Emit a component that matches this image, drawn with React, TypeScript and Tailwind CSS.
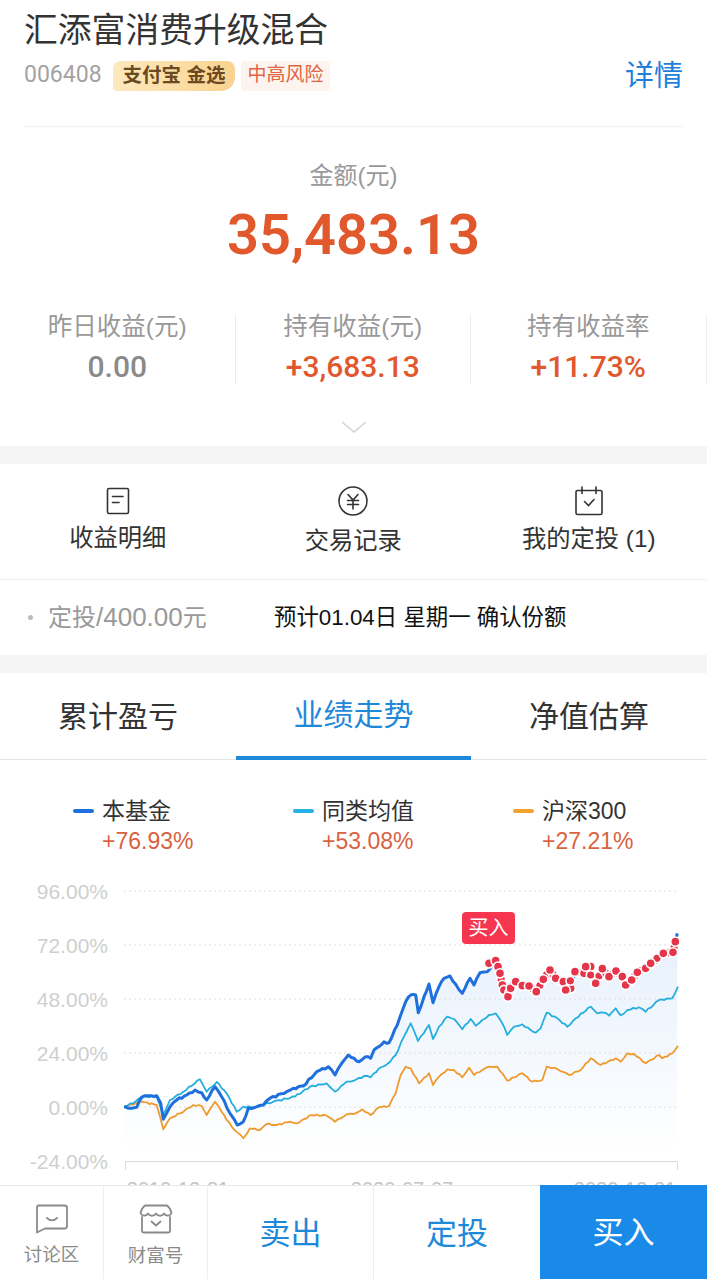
const cjk = "font-['Liberation_Sans','Noto_Sans_CJK_SC',sans-serif]";
const num = "font-['Roboto','Noto_Sans_CJK_SC',sans-serif]";

// chart traces, read off the picture as [x, y] in page pixels
const toPage = (pts: number[][], ox: number) => pts.map(([x, y]) => [ox + x / 3, 870 + y / 3]);

const bluePts = [
  ...toPage([[373,710],[395,715],[410,712],[425,682],[445,677],[470,677],[482,700],[490,748],[510,710],[530,690],[560,675],[585,660],[605,668],[620,690],[645,650],[665,680],[690,730],[712,765],[730,755],[745,715],[765,712],[790,705],[810,685],[860,665],[880,655],[910,648],[950,605],[985,590],[1005,615],[1025,580],[1045,555]], 0),
  ...toPage([[0,565],[15,575],[35,560],[50,565],[60,540],[75,530],[90,515],[105,518],[130,465],[155,395],[170,375],[185,375],[193,428],[210,380],[225,342],[237,398],[255,350],[270,325],[288,318],[305,343],[325,370],[348,325],[360,345],[378,308],[400,305],[425,272],[438,310],[462,380],[485,335],[505,347],[525,348],[547,365],[568,328],[588,300],[628,335],[650,355],[663,305],[710,290],[725,340],[745,296],[765,320],[786,303],[815,345],[850,307],[905,270],[957,247],[964,215],[970,190]], 354),
];

const cyanPts = [
  ...toPage([[373,708],[400,700],[425,680],[470,680],[490,735],[510,690],[550,665],[600,628],[620,665],[650,636],[680,670],[710,725],[730,710],[760,712],[820,695],[885,680],[930,650],[980,640],[1005,665],[1040,635]], 0),
  ...toPage([[0,632],[30,618],[50,622],[75,595],[100,582],[125,555],[150,500],[170,460],[192,513],[225,465],[237,507],[255,470],[280,440],[300,447],[325,478],[350,447],[365,467],[385,450],[405,435],[425,430],[445,460],[460,495],[480,470],[505,463],[530,480],[545,488],[560,475],[578,428],[610,445],[640,470],[665,445],[710,410],[730,430],[750,428],[765,437],[785,415],[800,436],[820,420],[855,412],[875,425],[915,390],[955,385],[972,350]], 354),
];

const orangePts = [
  ...toPage([[373,710],[425,695],[470,705],[490,778],[510,745],[540,730],[580,705],[605,708],[620,735],[645,695],[665,725],[695,770],[730,805],[750,775],[780,780],[800,762],[830,765],[870,755],[890,760],[935,735],[980,737],[1005,755],[1040,733]], 0),
  ...toPage([[0,732],[25,718],[50,735],[75,712],[105,708],[125,670],[140,615],[155,590],[170,595],[195,640],[225,610],[237,645],[255,620],[280,598],[300,600],[325,622],[345,593],[360,615],[385,600],[405,590],[430,590],[460,632],[505,610],[535,635],[565,630],[578,590],[610,597],[645,615],[680,600],[710,565],[740,585],[785,565],[800,575],[820,550],[840,552],[875,580],[915,555],[925,565],[955,550],[972,527]], 354),
];

const redDots = toPage([[405,280],[425,272],[432,290],[438,310],[445,345],[450,360],[462,380],[470,355],[485,335],[505,347],[525,348],[547,365],[568,328],[588,300],[605,325],[628,335],[650,355],[635,360],[663,305],[690,310],[710,290],[695,290],[725,340],[745,296],[765,320],[786,303],[805,320],[815,345],[833,330],[850,307],[875,295],[905,270],[890,280],[928,250],[957,247],[964,215]], 354);

// adds small fixed wiggle between the read-off points
function wiggle(pts: number[][], amp: number) {
  const out: number[][] = [];
  pts.forEach((p, i) => {
    out.push(p);
    const n = pts[i + 1];
    if (!n) return;
    const steps = Math.floor((n[0] - p[0]) / 2.5);
    for (let s = 1; s < steps; s++) {
      const t = s / steps;
      out.push([p[0] + (n[0] - p[0]) * t, p[1] + (n[1] - p[1]) * t + Math.sin(s * 2.3 + i) * amp]);
    }
  });
  return out;
}

const toStr = (pts: number[][]) => pts.map(([x, y]) => `${x.toFixed(1)},${(y - 880).toFixed(1)}`).join(" ");

function Chart() {
  const blue = wiggle(bluePts, 1);
  const area = `${toStr(blue)} 677,270 124,270`;
  const grid = [
    ["96.00%", 891],
    ["72.00%", 945],
    ["48.00%", 999],
    ["24.00%", 1053],
    ["0.00%", 1107],
    ["-24.00%", 1161],
  ] as const;
  return (
    <svg width="707" height="306" viewBox="0 0 707 306" className="block">
      <defs>
        <linearGradient id="areaFill" x1="0" y1="0" x2="0" y2="1">
          <stop offset="0" stopColor="#e6f0fc" />
          <stop offset="1" stopColor="#ffffff" />
        </linearGradient>
      </defs>
      <polygon points={area} fill="url(#areaFill)" />
      {grid.map(([label, y], i) => (
        <g key={label}>
          {i < 5 && <line x1="124" x2="677" y1={y - 880} y2={y - 880} stroke="#dedede" strokeWidth="1" strokeDasharray="2 3" />}
          <text x="108" y={y - 880 + 8} textAnchor="end" fontSize="21" fill="#cfcfcf" fontFamily="Liberation Sans, sans-serif">{label}</text>
        </g>
      ))}
      <path d="M125.5 290V281.5H677.5V290" fill="none" stroke="#dcdcdc" strokeWidth="1" />
      <text x="178" y="316" textAnchor="middle" fontSize="20" fill="#c4c4c4" fontFamily="Liberation Sans, sans-serif">2019-12-31</text>
      <text x="402" y="316" textAnchor="middle" fontSize="20" fill="#c4c4c4" fontFamily="Liberation Sans, sans-serif">2020-07-07</text>
      <text x="625" y="316" textAnchor="middle" fontSize="20" fill="#c4c4c4" fontFamily="Liberation Sans, sans-serif">2020-12-31</text>
      <polyline points={toStr(wiggle(orangePts, 0.7))} fill="none" stroke="#ef9a2e" strokeWidth="1.8" strokeLinejoin="round" />
      <polyline points={toStr(wiggle(cyanPts, 0.8))} fill="none" stroke="#25aedd" strokeWidth="1.8" strokeLinejoin="round" />
      <polyline points={toStr(blue)} fill="none" stroke="#1f6fdc" strokeWidth="3" strokeLinejoin="round" />
      {redDots.map(([x, y], i) => {
        const next = redDots[i + 1];
        return (
          <g key={i}>
            {next && <circle cx={(x + next[0]) / 2} cy={(y + next[1]) / 2 - 880} r="4.4" fill="#e5354b" stroke="#ffffff" strokeWidth="1.6" />}
            <circle cx={x} cy={y - 880} r="4.6" fill="#e5354b" stroke="#ffffff" strokeWidth="1.6" />
          </g>
        );
      })}
      <rect x="462" y="32" width="53" height="32" rx="4" fill="#f5364e" />
      <text x="488.5" y="55" textAnchor="middle" fontSize="20" fill="#fff" fontFamily="Noto Sans CJK SC, sans-serif">买入</text>
    </svg>
  );
}

function Stat({ label, value, accent }: { label: string; value: string; accent?: boolean }) {
  return (
    <div className="flex h-[70px] w-[235.5px] flex-col items-center justify-between border-r border-[#eeeeee]">
      <span className="text-[24.5px] leading-[26px] text-[#999999]">{label}</span>
      <span className={`${num} text-[30px] leading-[34px] font-medium ${accent ? "text-[#e0582c]" : "text-[#8a8a8a]"}`}>{value}</span>
    </div>
  );
}

function Legend({ color, name, pct }: { color: string; name: string; pct: string }) {
  return (
    <div className="w-[220px] shrink-0">
      <div className="flex items-center">
        <span className={`h-[4px] w-[21px] rounded-full ${color}`} />
        <span className="ml-[8px] text-[23px] leading-[30px] text-[#333333]">{name}</span>
      </div>
      <div className="ml-[29px] text-[23px] leading-[30px] text-[#d9633f]">{pct}</div>
    </div>
  );
}

function DocIcon() {
  return (
    <svg width="24" height="28" viewBox="0 0 24 28" fill="none" stroke="#333" strokeWidth="1.6">
      <rect x="1.5" y="1.5" width="21" height="25" rx="1.5" />
      <path d="M6.5 9.5H17M6.5 15.5H13" strokeLinecap="round" />
    </svg>
  );
}

function YuanIcon() {
  return (
    <svg width="30" height="30" viewBox="0 0 30 30" fill="none" stroke="#333" strokeWidth="1.6">
      <circle cx="15" cy="15" r="14" />
      <path d="M10 8.5L15 14L20 8.5M9.5 14.5H20.5M9.5 18.5H20.5M15 14V23" strokeLinecap="round" />
    </svg>
  );
}

function CalIcon() {
  return (
    <svg width="30" height="30" viewBox="0 0 30 30" fill="none" stroke="#333" strokeWidth="1.6">
      <rect x="2" y="4.5" width="26" height="24" rx="1.5" />
      <path d="M8 1V7.5M22 1V7.5M10.5 15.5L14.5 19.5L20 13.5" strokeLinecap="round" />
    </svg>
  );
}

function ChatIcon() {
  return (
    <svg width="34" height="30" viewBox="0 0 34 30" fill="none" stroke="#8a8a8a" strokeWidth="1.8" strokeLinejoin="round">
      <path d="M3.5 1.5H29.5C31 1.5 32 2.5 32 4V22C32 23.5 31 24.5 29.5 24.5H10L2 28.5V3C2 2 2.5 1.5 3.5 1.5Z" />
      <path d="M12 14C15 17 19 17 22 14" strokeLinecap="round" />
    </svg>
  );
}

function ShopIcon() {
  return (
    <svg width="34" height="30" viewBox="0 0 34 30" fill="none" stroke="#8a8a8a" strokeWidth="1.8" strokeLinejoin="round">
      <path d="M6 1.5H28C30 3 32 6 32.5 9C31 12.5 27 12.5 25 9.5C23 12.5 19 12.5 17 9.5C15 12.5 11 12.5 9 9.5C7 12.5 3 12.5 1.5 9C2 6 4 3 6 1.5Z" />
      <path d="M3 13V27C3 28 3.5 28.5 4.5 28.5H29.5C30.5 28.5 31 28 31 27V13M12.5 17.5L17 21.5L21.5 17.5" strokeLinecap="round" />
    </svg>
  );
}

export default function App() {
  return (
    <div className={`relative h-[1280px] w-[707px] overflow-hidden bg-white ${cjk}`}>
      <header className="px-[24px]">
        <h1 className="h-[60px] text-[33.8px] leading-[60px] font-normal text-[#333333]">汇添富消费升级混合</h1>
        <div className="flex h-[31px] items-center">
          <span className={`${num} w-[89px] text-[23px] text-[#a3a3a3]`}>006408</span>
          <span className="flex h-[30px] w-[122px] items-center justify-center rounded-tl-[8px] rounded-tr-[8px] rounded-br-[14px] rounded-bl-[4px] bg-gradient-to-r from-[#fde9bd] to-[#f9d28f] text-[19.5px] font-bold text-[#6b4a1f]">支付宝 金选</span>
          <span className="ml-[6px] flex h-[30px] w-[89px] items-center justify-center rounded-[4px] bg-[#fdf4f0] text-[19px] text-[#e0643f]">中高风险</span>
          <span className="ml-auto text-[29px] leading-[30px] text-[#1e7fdc]">详情</span>
        </div>
        <div className="mt-[35px] border-t border-[#f1f1f1]" />
      </header>

      <section className="flex h-[319px] flex-col items-center">
        <div className="mt-[34px] text-[24px] leading-[30px] text-[#999999]">金额(元)</div>
        <div className={`${num} mt-[14px] text-[56px] leading-[60px] font-semibold text-[#e0582c]`}>35,483.13</div>
        <div className="mt-[49px] flex w-full">
          <Stat label="昨日收益(元)" value="0.00" />
          <Stat label="持有收益(元)" value="+3,683.13" accent />
          <Stat label="持有收益率" value="+11.73%" accent />
        </div>
        <svg width="26" height="12" viewBox="0 0 26 12" fill="none" stroke="#d4d4d4" strokeWidth="1.6" className="mt-[37px]">
          <path d="M1 1L13 11L25 1" />
        </svg>
      </section>

      <div className="h-[18px] bg-[#f5f5f5]" />

      <section className="flex h-[116px] border-b border-[#eeeeee]">
        {[
          { icon: <DocIcon />, label: "收益明细", pad: "pt-[23px]", gap: "mt-[6px]" },
          { icon: <YuanIcon />, label: "交易记录", pad: "pt-[22px]", gap: "mt-[8px]" },
          { icon: <CalIcon />, label: "我的定投 (1)", pad: "pt-[22px]", gap: "mt-[6px]" },
        ].map((a) => (
          <div key={a.label} className={`flex w-[235.5px] flex-col items-center ${a.pad}`}>
            {a.icon}
            <span className={`${a.gap} text-[24.3px] leading-[34px] text-[#333333]`}>{a.label}</span>
          </div>
        ))}
      </section>

      <section className="flex h-[75px] items-center">
        <span className="ml-[28px] h-[5px] w-[5px] rounded-full bg-[#bbbbbb]" />
        <span className="ml-[15px] w-[226px] text-[24px] text-[#999999]">定投<span className="text-[26px]">/400.00</span>元</span>
        <span className="text-[22.4px] text-[#111111]">预计01.04日 星期一 确认份额</span>
      </section>

      <div className="h-[18px] bg-[#f5f5f5]" />

      <nav className="flex h-[87px] border-b border-[#e5e5e5]">
        <div className="flex w-[236px] items-center justify-center text-[30px] text-[#333333]">累计盈亏</div>
        <div className="-mb-px flex w-[235px] items-center justify-center border-b-[4px] border-[#1e88d9] text-[30px] text-[#1e88d9]">业绩走势</div>
        <div className="flex w-[236px] items-center justify-center text-[30px] text-[#333333]">净值估算</div>
      </nav>

      <div className="flex pt-[36px] pl-[73px]">
        <Legend color="bg-[#1f6fdc]" name="本基金" pct="+76.93%" />
        <Legend color="bg-[#25b0e6]" name="同类均值" pct="+53.08%" />
        <Legend color="bg-[#f2a32f]" name="沪深300" pct="+27.21%" />
      </div>

      <div className="mt-[24px]">
        <Chart />
      </div>

      <footer className="absolute inset-x-0 bottom-0 flex h-[95px] border-t border-[#e8e8e8] bg-white pb-px">
        <div className="flex w-[104px] flex-col items-center border-r border-[#eeeeee] pt-[18px]">
          <ChatIcon />
          <span className="mt-[8px] text-[18.5px] leading-[26px] text-[#8a8a8a]">讨论区</span>
        </div>
        <div className="flex w-[104px] flex-col items-center border-r border-[#eeeeee] pt-[18px]">
          <ShopIcon />
          <span className="mt-[9px] text-[18.5px] leading-[26px] text-[#8a8a8a]">财富号</span>
        </div>
        <div className="flex w-[166px] items-center justify-center border-r border-[#eeeeee] pt-[3px] text-[31px] text-[#1e88d9]">卖出</div>
        <div className="flex w-[166px] items-center justify-center pt-[3px] text-[31px] text-[#1e88d9]">定投</div>
        <div className="-mt-px flex flex-1 items-center justify-center bg-[#1a8ae8] pt-[3px] text-[31px] text-white">买入</div>
      </footer>
    </div>
  );
}
